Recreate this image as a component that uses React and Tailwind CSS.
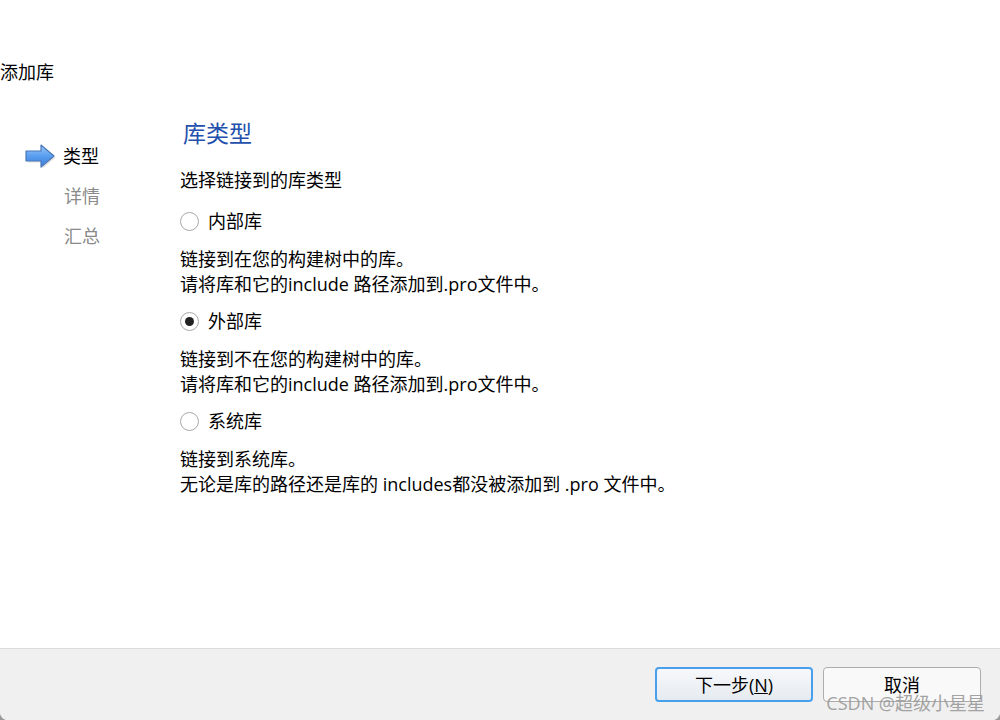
import React from 'react';

const font = { fontFamily: '"Open Sans", "Noto Sans CJK SC", sans-serif' };

const StepArrow = () => (
  <svg width="34" height="28" viewBox="0 0 34 28">
    <defs>
      <linearGradient id="arrowFill" x1="0" y1="0" x2="0" y2="1">
        <stop offset="0" stopColor="#9cc8f7" />
        <stop offset="0.5" stopColor="#5a9ef0" />
        <stop offset="1" stopColor="#3a7fd8" />
      </linearGradient>
    </defs>
    <path d="M3 9 H18 V3 L31 14 L18 25 V19 H3 Z" fill="#000" opacity="0.12" transform="translate(1.5,1.5)" />
    <path d="M3 9 H18 V3 L31 14 L18 25 V19 H3 Z" fill="url(#arrowFill)" stroke="#4a78b8" strokeWidth="1.2" strokeLinejoin="round" />
  </svg>
);

const Radio = ({ checked, label }) => (
  <div className="flex items-center h-[24px] gap-[9px]">
    <div className="w-[19px] h-[19px] rounded-full border-[1.5px] border-[#a8a8a8] bg-white flex items-center justify-center">
      {checked && <div className="w-[9px] h-[9px] rounded-full bg-[#222]" />}
    </div>
    <span className="text-[18px] leading-[24px] text-black">{label}</span>
  </div>
);

const Desc = ({ lines }) => (
  <div className="mt-[14px] text-[18px] leading-[25px] text-black">
    {lines.map((l, i) => (
      <div key={i}>{l}</div>
    ))}
  </div>
);

export default function App() {
  return (
    <div className="w-[1000px] h-[720px] bg-[#9a9a9a] overflow-hidden" style={font}>
      <div className="w-full h-full bg-white rounded-b-[8px] overflow-hidden flex flex-col">
        <div className="h-[648px] pt-[60px]">
          <div className="text-[18px] leading-[24px] text-black">添加库</div>

          <div className="flex mt-[34px]">
            {/* Steps */}
            <div className="w-[180px] pl-[23px] pt-[18px]">
              <div className="flex items-center h-[40px] gap-[6px]">
                <StepArrow />
                <span className="text-[18px] text-black">类型</span>
              </div>
              <div className="flex items-center h-[40px] pl-[41px] text-[18px] text-[#8a8a8a]">详情</div>
              <div className="flex items-center h-[40px] pl-[41px] text-[18px] text-[#8a8a8a]">汇总</div>
            </div>

            {/* Content */}
            <div className="flex-1">
              <div className="pl-[3px] text-[23px] leading-[30px] text-[#2250ad]">库类型</div>
              <div className="mt-[20px] text-[18px] leading-[25px] text-black">选择链接到的库类型</div>

              <div className="mt-[16px]">
                <Radio label="内部库" />
              </div>
              <Desc lines={['链接到在您的构建树中的库。', '请将库和它的include 路径添加到.pro文件中。']} />

              <div className="mt-[12px]">
                <Radio checked label="外部库" />
              </div>
              <Desc lines={['链接到不在您的构建树中的库。', '请将库和它的include 路径添加到.pro文件中。']} />

              <div className="mt-[12px]">
                <Radio label="系统库" />
              </div>
              <Desc lines={['链接到系统库。', '无论是库的路径还是库的 includes都没被添加到 .pro 文件中。']} />
            </div>
          </div>
        </div>

        {/* Footer */}
        <div className="relative flex-1 bg-[#f0f0f0] border-t border-[#dcdcdc] flex justify-end items-start pt-[18px] pr-[19px] gap-[10px]">
          <button className="w-[158px] h-[35px] rounded-[4px] border-2 border-[#48a0ec] bg-gradient-to-b from-[#f6f8fb] to-[#e6ebf1] text-[18px] text-black leading-none">
            下一步(<span className="underline">N</span>)
          </button>
          <button className="w-[158px] h-[35px] rounded-[4px] border border-[#adadad] bg-[#f9f9f9] text-[18px] text-black leading-none">
            取消
          </button>
          <div className="absolute right-[15px] bottom-[6px] text-[18px] leading-[22px] text-[#9a9a9a] opacity-90 pointer-events-none">
            CSDN @超级小星星
          </div>
        </div>
      </div>
    </div>
  );
}
